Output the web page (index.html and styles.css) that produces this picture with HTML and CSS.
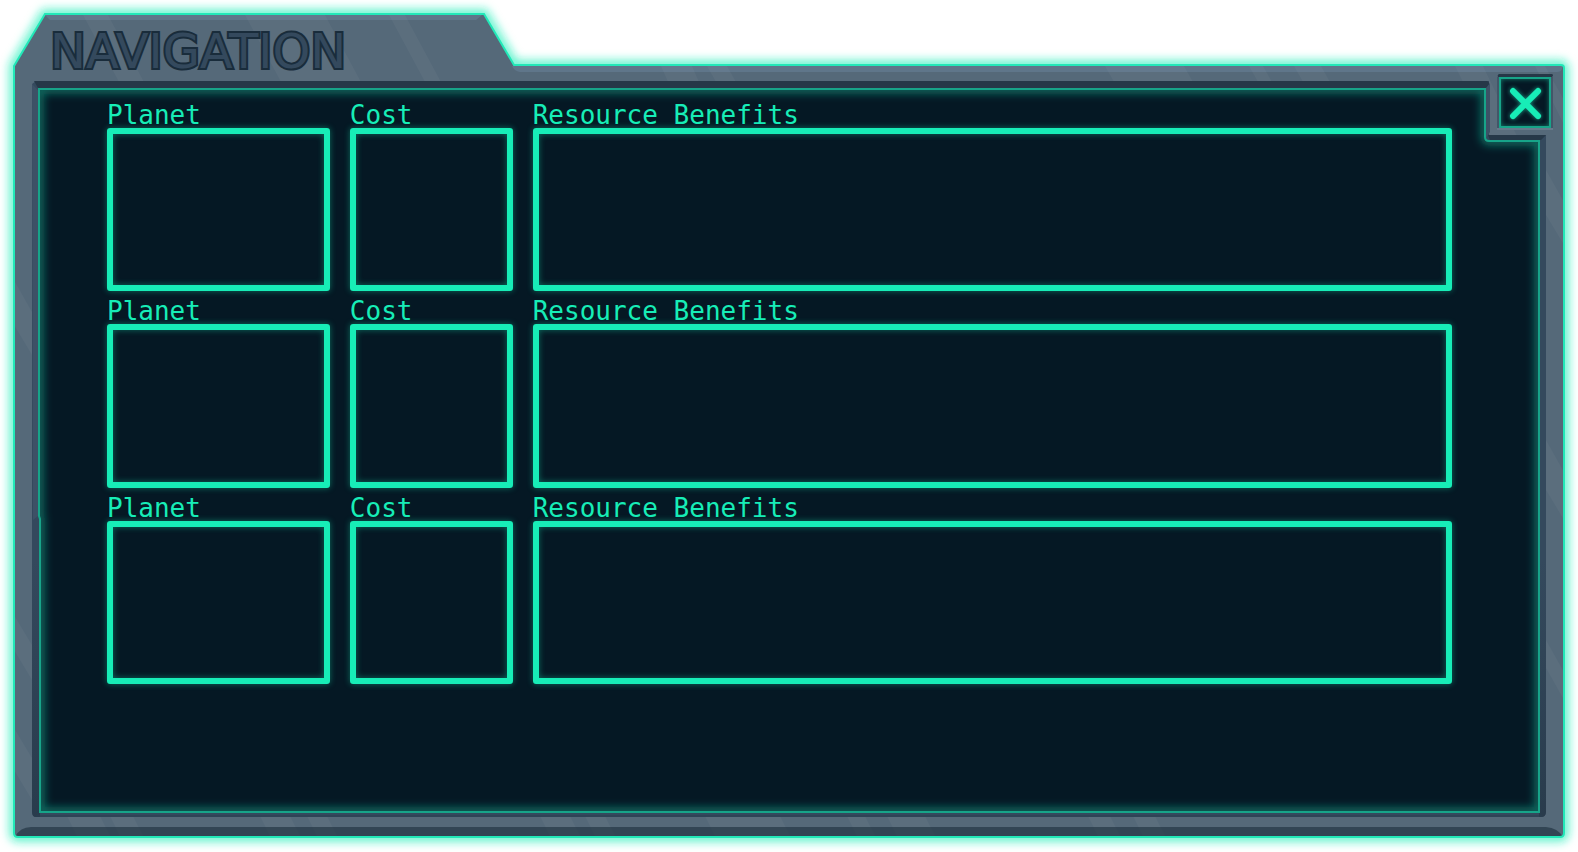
FILE: index.html
```html
<!DOCTYPE html>
<html lang="en">
<head>
<meta charset="utf-8">
<title>Navigation</title>
<link rel="stylesheet" href="styles.css">
</head>
<body>
<main class="panel">
  <svg class="frame" viewBox="0 0 1578 852" preserveAspectRatio="none" aria-hidden="true">
    <defs>
      <path id="hull" d="M45 14H484L514 65H1561Q1564 65 1564 68V833Q1564 837 1560 837H18Q14 837 14 833V66Z"/>
      <path id="screen" d="M39 89H1485V137Q1485 141 1489 141H1539V812H40V519L39 516Z"/>
      <clipPath id="hullClip"><use href="#hull"/></clipPath>
      <clipPath id="screenClip"><use href="#screen"/></clipPath>
      <filter id="wideGlow" x="-5%" y="-5%" width="110%" height="110%"><feGaussianBlur stdDeviation="5"/></filter>
      <filter id="softGlow" x="-5%" y="-5%" width="110%" height="110%"><feGaussianBlur stdDeviation="4"/></filter>
      <linearGradient id="sideShade" x1="0" y1="0" x2="0" y2="1">
        <stop offset="0" stop-color="#263848" stop-opacity="0"/>
        <stop offset="1" stop-color="#263848" stop-opacity=".8"/>
      </linearGradient>
    </defs>
    <use href="#hull" fill="none" stroke="#17edb7" stroke-width="9" stroke-opacity=".75" filter="url(#wideGlow)"/>
    <use href="#hull" fill="#556979"/>
    <g clip-path="url(#hullClip)">
      <path fill="#5f768a" d="M45 15H482L476 20H50ZM512 66H1562V69Q1561 72 1557 72H520Q514 71 512 66Z"/>
      <path fill="#ffffff" fill-opacity=".035" d="M83 15H108L144 82H119ZM245 15H325L361 82H281ZM389 15H405L441 82H425ZM661 66H692L699 82H668ZM707 66H727L736 82H716ZM1105 66H1184L1193 82H1114ZM1249 66H1263L1272 82H1258ZM1294 66H1321L1330 82H1303ZM1455 66H1483L1517 136H1490ZM1535 66H1545L1564 100V125ZM1546 170L1564 202V245L1546 215ZM1546 440L1564 472V520L1546 490ZM1546 640L1564 672V700L1546 668ZM14 280L32 312V355L14 325ZM14 615L32 645V680L14 650ZM14 728L32 758V800L14 770ZM67 816H100L110 836H77ZM110 816H133L143 836H120ZM260 816H290L300 836H270ZM307 816H327L337 836H317ZM540 816H570L580 836H550ZM585 816H605L615 836H595ZM705 816H780L790 836H715ZM847 816H865L875 836H857ZM887 816H925L935 836H897ZM1088 816H1110L1120 836H1098ZM1133 816H1155L1165 836H1143Z"/>
      <path fill="#213341" fill-opacity=".65" d="M15 837Q20 827 31 827H1546Q1558 828 1563 837Z"/>
    </g>
    <path fill="#34495d" d="M32 84L36 81H1489V135H1546V812Q1546 817 1541 817H36Q32 817 32 812Z"/>
    <path fill="#263848" d="M34 81H1487Q1490 82 1489 85L1487 88H38ZM1488 135H1546L1541 140H1490Z"/>
    <path fill="#3d5166" d="M1486 88L1490 83V132L1486 138ZM32 84L38 90V516L33 520Z"/>
    <path fill="url(#sideShade)" d="M32 560H40V817H36Q32 817 32 812ZM1539 560H1546V812Q1546 817 1541 817H1539Z"/>
    <path fill="none" stroke="#2a3e50" d="M36 816H1542"/>
    <use href="#screen" fill="#051824"/>
    <g clip-path="url(#screenClip)"><use href="#screen" fill="none" stroke="#17a489" stroke-width="9" stroke-opacity=".6" filter="url(#softGlow)"/></g>
    <use href="#screen" fill="none" stroke="#17a489" stroke-width="2"/>
    <path fill="#263848" d="M1499 74H1552Q1554 75 1552 77H1498Q1497 75 1499 74Z"/>
    <path fill="#435668" d="M1551 77H1553V128H1551ZM1497 77H1499V128H1497Z"/>
    <path fill="#657a8b" d="M1497 128H1553V130H1497Z"/>
    <use href="#hull" fill="none" stroke="#22e8b8" stroke-width="2"/>
  </svg>

  <header class="header"><h1 class="title">NAVIGATION</h1></header>

  <button class="close" type="button" aria-label="Close">
    <svg class="close-icon" viewBox="0 0 48 47" aria-hidden="true"><path d="M12 12L37 37M37 12L12 37"/></svg>
  </button>

  <div class="rows">
    <section class="row">
      <div class="cell"><h2 class="label">Planet</h2><div class="box"></div></div>
      <div class="cell"><h2 class="label">Cost</h2><div class="box"></div></div>
      <div class="cell"><h2 class="label">Resource Benefits</h2><div class="box"></div></div>
    </section>
    <section class="row">
      <div class="cell"><h2 class="label">Planet</h2><div class="box"></div></div>
      <div class="cell"><h2 class="label">Cost</h2><div class="box"></div></div>
      <div class="cell"><h2 class="label">Resource Benefits</h2><div class="box"></div></div>
    </section>
    <section class="row">
      <div class="cell"><h2 class="label">Planet</h2><div class="box"></div></div>
      <div class="cell"><h2 class="label">Cost</h2><div class="box"></div></div>
      <div class="cell"><h2 class="label">Resource Benefits</h2><div class="box"></div></div>
    </section>
  </div>
</main>
</body>
</html>
```
FILE: styles.css
```css
* {
  box-sizing: border-box;
}

body {
  margin: 0;
  background: #ffffff;
  font-family: "DejaVu Sans", sans-serif;
}

.panel {
  position: relative;
  display: flex;
  flex-direction: column;
  min-height: 100vh;
}

.frame {
  position: absolute;
  inset: 0;
  width: 100%;
  height: 100%;
}

.header {
  position: relative;
  padding: 21px 50px 22px;
}

.title {
  margin: 0;
  font-size: 48px;
  font-weight: 400;
  line-height: 60px;
  color: #34495d;
  -webkit-text-stroke: 4px #192c3b;
  paint-order: stroke fill;
}

.close {
  position: absolute;
  left: 95%;
  top: 9%;
  width: 3.3%;
  height: 6%;
  padding: 0;
  border: 2px solid #17a489;
  background: #051824;
  box-shadow: inset 0 0 5px rgba(23, 164, 137, 0.7);
  cursor: pointer;
}

.close-icon {
  display: block;
  width: 100%;
  height: 100%;
  fill: none;
  stroke: #17edb7;
  stroke-width: 6;
  stroke-linecap: round;
  filter: drop-shadow(0 0 2px #17a489);
}

.rows {
  position: relative;
  flex: 1;
  display: grid;
  grid-template-rows: repeat(3, 1fr);
  gap: 8px;
  padding: 0 126px 168px 107px;
}

.row {
  display: grid;
  grid-template-columns: 223fr 163fr 920fr;
  gap: 20px;
}

.cell {
  display: flex;
  flex-direction: column;
  min-width: 0;
}

.label {
  margin: 0;
  font-family: "DejaVu Sans Mono", monospace;
  font-size: 26px;
  font-weight: 400;
  line-height: 25px;
  white-space: nowrap;
  color: #17edb7;
}

.box {
  flex: 1;
  min-height: 80px;
  border: 6px solid #17edb7;
  border-radius: 3px;
  box-shadow: 0 0 6px rgba(23, 237, 183, 0.4), inset 0 0 6px rgba(23, 237, 183, 0.4);
}
```
